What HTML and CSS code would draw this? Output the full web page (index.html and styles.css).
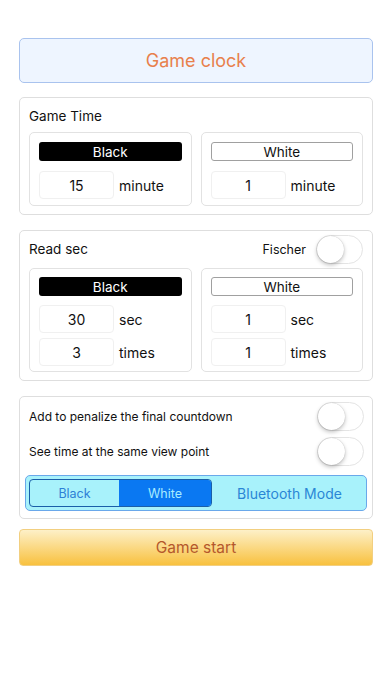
FILE: index.html
```html
<!DOCTYPE html>
<html lang="en">
<head>
<meta charset="utf-8">
<title>Game clock</title>
<meta name="viewport" content="width=device-width, initial-scale=1">
<link rel="stylesheet" href="styles.css">
</head>
<body>
  <div class="page">
    <div class="header">Game clock</div>

    <!-- Main time -->
    <div class="card card-time">
      <div class="card-title">Game Time</div>
      <div class="sides">
        <div class="side">
          <div class="tag tag-black">Black</div>
          <div class="field"><div class="num">15</div><span class="unit">minute</span></div>
        </div>
        <div class="side">
          <div class="tag tag-white">White</div>
          <div class="field"><div class="num">1</div><span class="unit">minute</span></div>
        </div>
      </div>
    </div>

    <!-- Byoyomi -->
    <div class="card card-read">
      <div class="title-row">
        <span class="card-title">Read sec</span>
        <span class="fischer">Fischer</span>
        <span class="switch"></span>
      </div>
      <div class="sides">
        <div class="side">
          <div class="tag tag-black">Black</div>
          <div class="field"><div class="num">30</div><span class="unit">sec</span></div>
          <div class="field"><div class="num">3</div><span class="unit">times</span></div>
        </div>
        <div class="side">
          <div class="tag tag-white">White</div>
          <div class="field"><div class="num">1</div><span class="unit">sec</span></div>
          <div class="field"><div class="num">1</div><span class="unit">times</span></div>
        </div>
      </div>
    </div>

    <!-- Options -->
    <div class="card card-opts">
      <div class="opt">
        <span>Add to penalize the final countdown</span>
        <span class="switch"></span>
      </div>
      <div class="opt">
        <span>See time at the same view point</span>
        <span class="switch"></span>
      </div>
      <div class="bt-bar">
        <div class="seg">
          <span class="seg-item">Black</span>
          <span class="seg-item seg-on">White</span>
        </div>
        <span class="bt-label">Bluetooth Mode</span>
      </div>
    </div>

    <div class="start">Game start</div>
  </div>
</body>
</html>
```

FILE: styles.css
```css
body {
  margin: 0;
  background: #ffffff;
  font-family: Inter, "Liberation Sans", sans-serif;
  color: #111;
}

.page {
  padding: 38px 19px 0;
}

.header {
  height: 45px;
  box-sizing: border-box;
  border: 1px solid #a9c3ee;
  border-radius: 5px;
  background: #eef5ff;
  color: #e8804c;
  font-size: 18px;
  display: flex;
  align-items: center;
  justify-content: center;
  margin-bottom: 14px;
}

/* Cards */
.card {
  border: 1px solid #dedede;
  border-radius: 5px;
  padding: 8px 9px 8px;
}
.card-read, .card-opts { margin-top: 15px; }

.card-title {
  font-size: 13.5px;
  line-height: 20px;
}
.card-time .card-title { margin-bottom: 6px; }

.title-row {
  display: flex;
  align-items: center;
  height: 28px;
  margin: -4px 0 5px;
}
.title-row .card-title { flex: 1; }
.fischer {
  font-size: 12.5px;
  margin-right: 10px;
}

.sides {
  display: grid;
  grid-template-columns: 1fr 1fr;
  gap: 9px;
}

.side {
  border: 1px solid #e2e2e2;
  border-radius: 5px;
  padding: 9px 9px 6px 9px;
  display: flex;
  flex-direction: column;
  gap: 10px;
}
.card-read .side { padding: 8px 9px 5px; gap: 0; }
.card-read .tag { margin-bottom: 9px; }
.card-read .field + .field { margin-top: 5px; }

.tag {
  height: 19px;
  flex: none;
  border-radius: 3px;
  font-size: 13.5px;
  display: flex;
  align-items: center;
  justify-content: center;
  box-sizing: border-box;
}
.tag-black { background: #000; color: #fff; }
.tag-white { background: #fff; border: 1px solid #a0a0a0; color: #111; }

.field {
  display: flex;
  align-items: center;
  height: 28px;
  flex: none;
}
.num {
  width: 75px;
  height: 28px;
  box-sizing: border-box;
  border: 1px solid #f0f0f0;
  border-radius: 4px;
  display: flex;
  align-items: center;
  justify-content: center;
  font-size: 14px;
}
.unit {
  margin-left: 5px;
  font-size: 14px;
}

/* iOS style switch, off */
.switch {
  position: relative;
  width: 47px;
  height: 29px;
  box-sizing: border-box;
  border: 1px solid #e4e4e4;
  border-radius: 15px;
  background: #fff;
  flex: none;
}
.switch::after {
  content: "";
  position: absolute;
  left: 0;
  top: 0;
  width: 27px;
  height: 27px;
  border-radius: 50%;
  background: #fff;
  box-shadow: 0 2px 4px rgba(0,0,0,.25), 0 0 1px rgba(0,0,0,.25);
}

.card-opts { padding: 5px 5px 7px; }
.opt {
  display: flex;
  align-items: center;
  justify-content: space-between;
  height: 29px;
  padding: 0 3px 0 4px;
  font-size: 12px;
}
.opt + .opt { margin-top: 6px; }

.bt-bar {
  margin-top: 9px;
  height: 36px;
  box-sizing: border-box;
  border: 1px solid #6aa8ea;
  border-radius: 5px;
  background: #a8f2fb;
  padding: 3px;
  display: flex;
  align-items: center;
}
.seg {
  display: flex;
  width: 183px;
  height: 28px;
  box-sizing: border-box;
  border: 1px solid #1a5fa8;
  border-radius: 4px;
  overflow: hidden;
}
.seg-item {
  flex: 90;
  display: flex;
  align-items: center;
  justify-content: center;
  font-size: 12.5px;
  color: #2e80d6;
}
.seg-on {
  flex: 93;
  background: #0a78f2;
  color: #a8ecff;
}
.bt-label {
  flex: 1;
  text-align: center;
  color: #2a86d6;
  font-size: 14px;
  padding-left: 4px;
}

.start {
  margin-top: 10px;
  height: 37px;
  box-sizing: border-box;
  border: 1px solid #f2cf80;
  border-radius: 4px;
  background: linear-gradient(#fdf0c8, #fbdb8a 45%, #f8c13f);
  color: #b4582c;
  font-size: 15.5px;
  display: flex;
  align-items: center;
  justify-content: center;
}
```
